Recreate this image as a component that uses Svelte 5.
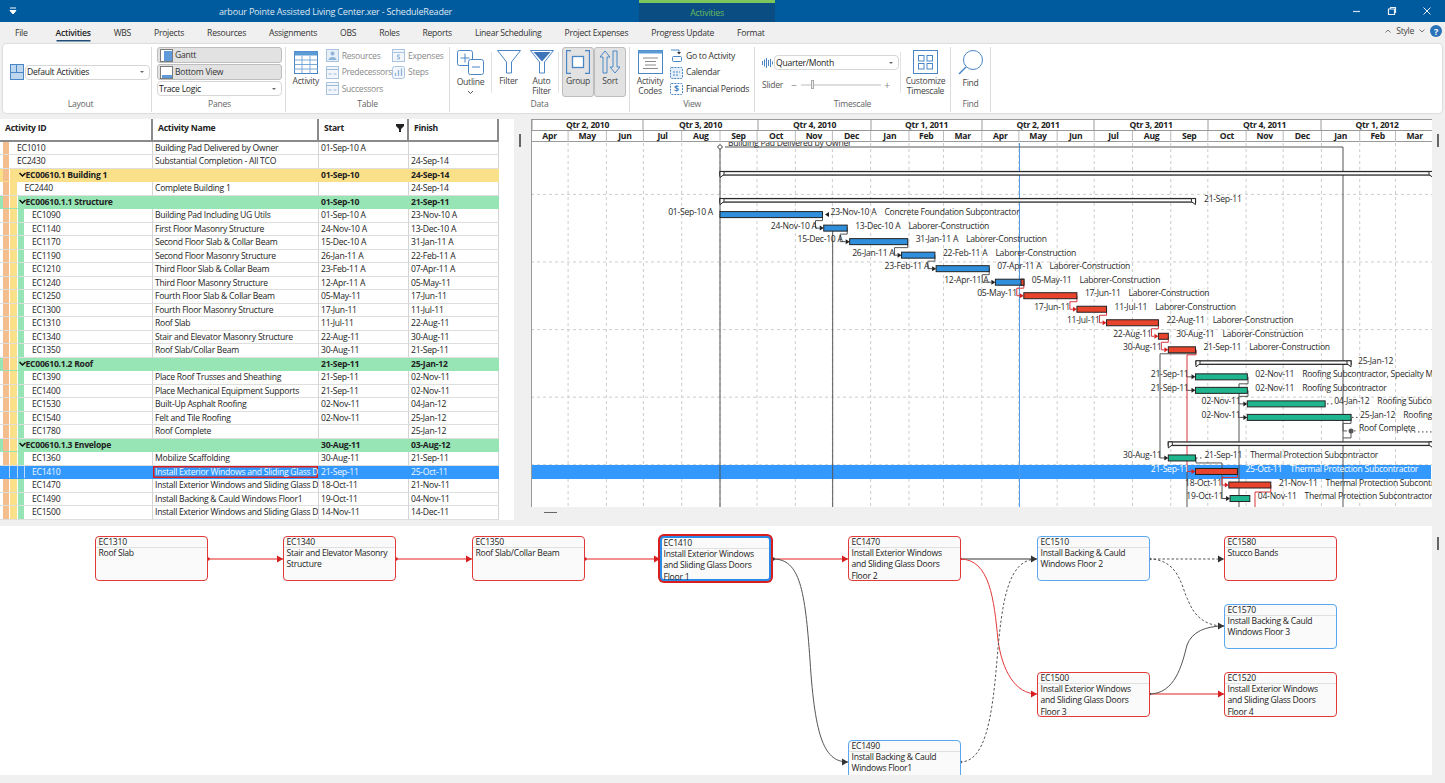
<script>
  const MON = { Jan: 0, Feb: 1, Mar: 2, Apr: 3, May: 4, Jun: 5, Jul: 6, Aug: 7, Sep: 8, Oct: 9, Nov: 10, Dec: 11 };
  const day = (s) => {
    const [d, m, y] = s.split(' ')[0].split('-');
    return Date.UTC(2000 + +y, MON[m], +d) / 86400000;
  };
  const ORIGIN = Date.UTC(2010, 8, 1) / 86400000;
  const PX = 1.235;
  const dx = (s) => 720 + (day(s) - ORIGIN) * PX;
  const ry = (i) => 147 + 13.52 * i;

  const W1 = 'Install Exterior Windows and Sliding Glass Doors Floor ';
  const LC = 'Laborer-Construction';
  const RS = 'Roofing Subcontractor';
  const TP = 'Thermal Protection Subcontractor';
  const rows = [
    { id: 'EC1010', name: 'Building Pad Delivered by Owner', start: '01-Sep-10 A', finish: '', lv: 0 },
    { id: 'EC2430', name: 'Substantial Completion - All TCO', start: '', finish: '24-Sep-14', lv: 0 },
    { wbs: 1, id: 'EC00610.1 Building 1', start: '01-Sep-10', finish: '24-Sep-14', lv: 1 },
    { id: 'EC2440', name: 'Complete Building 1', start: '', finish: '24-Sep-14', lv: 1 },
    { wbs: 2, id: 'EC00610.1.1 Structure', start: '01-Sep-10', finish: '21-Sep-11', lv: 2 },
    { id: 'EC1090', name: 'Building Pad Including UG Utils', start: '01-Sep-10 A', finish: '23-Nov-10 A', lv: 2, c: 'b', res: 'Concrete Foundation Subcontractor' },
    { id: 'EC1140', name: 'First Floor Masonry Structure', start: '24-Nov-10 A', finish: '13-Dec-10 A', lv: 2, c: 'b', res: LC, arr: 1 },
    { id: 'EC1170', name: 'Second Floor Slab & Collar Beam', start: '15-Dec-10 A', finish: '31-Jan-11 A', lv: 2, c: 'b', res: LC, arr: 1 },
    { id: 'EC1190', name: 'Second Floor Masonry Structure', start: '26-Jan-11 A', finish: '22-Feb-11 A', lv: 2, c: 'b', res: LC, arr: 1 },
    { id: 'EC1210', name: 'Third Floor Slab & Collar Beam', start: '23-Feb-11 A', finish: '07-Apr-11 A', lv: 2, c: 'b', res: LC, arr: 1 },
    { id: 'EC1240', name: 'Third Floor Masonry Structure', start: '12-Apr-11 A', finish: '05-May-11', lv: 2, c: 'b', res: LC, arr: 1 },
    { id: 'EC1250', name: 'Fourth Floor Slab & Collar Beam', start: '05-May-11', finish: '17-Jun-11', lv: 2, c: 'r', res: LC, arr: 2 },
    { id: 'EC1300', name: 'Fourth Floor Masonry Structure', start: '17-Jun-11', finish: '11-Jul-11', lv: 2, c: 'r', res: LC, arr: 2 },
    { id: 'EC1310', name: 'Roof Slab', start: '11-Jul-11', finish: '22-Aug-11', lv: 2, c: 'r', res: LC, arr: 2 },
    { id: 'EC1340', name: 'Stair and Elevator Masonry Structure', start: '22-Aug-11', finish: '30-Aug-11', lv: 2, c: 'r', res: LC, arr: 2 },
    { id: 'EC1350', name: 'Roof Slab/Collar Beam', start: '30-Aug-11', finish: '21-Sep-11', lv: 2, c: 'r', res: LC, arr: 2 },
    { wbs: 2, id: 'EC00610.1.2 Roof', start: '21-Sep-11', finish: '25-Jan-12', lv: 2 },
    { id: 'EC1390', name: 'Place Roof Trusses and Sheathing', start: '21-Sep-11', finish: '02-Nov-11', lv: 2, c: 't', res: RS + ', Specialty Materials', arr: 1 },
    { id: 'EC1400', name: 'Place Mechanical Equipment Supports', start: '21-Sep-11', finish: '02-Nov-11', lv: 2, c: 't', res: RS, arr: 1 },
    { id: 'EC1530', name: 'Built-Up Asphalt Roofing', start: '02-Nov-11', finish: '04-Jan-12', lv: 2, c: 't', res: RS, arr: 1, lead: 1 },
    { id: 'EC1540', name: 'Felt and Tile Roofing', start: '02-Nov-11', finish: '25-Jan-12', lv: 2, c: 't', res: RS, arr: 1, lead: 1 },
    { id: 'EC1780', name: 'Roof Complete', start: '', finish: '25-Jan-12', lv: 2 },
    { wbs: 2, id: 'EC00610.1.3 Envelope', start: '30-Aug-11', finish: '03-Aug-12', lv: 2 },
    { id: 'EC1360', name: 'Mobilize Scaffolding', start: '30-Aug-11', finish: '21-Sep-11', lv: 2, c: 't', res: TP, arr: 1, lead: 1 },
    { id: 'EC1410', name: W1 + '1', start: '21-Sep-11', finish: '25-Oct-11', lv: 2, c: 'r', res: TP, arr: 2, sel: 1 },
    { id: 'EC1470', name: W1 + '2', start: '18-Oct-11', finish: '21-Nov-11', lv: 2, c: 'r', res: TP, arr: 2 },
    { id: 'EC1490', name: 'Install Backing & Cauld Windows Floor1', start: '19-Oct-11', finish: '04-Nov-11', lv: 2, c: 't', res: TP, arr: 1 },
    { id: 'EC1500', name: W1 + '3', start: '14-Nov-11', finish: '14-Dec-11', lv: 2 }
  ].map((r, i) => ({ ...r, i, y: ry(i) }));

  const bars = rows.filter((r) => r.c).map((r) => ({ ...r, x1: dx(r.start), x2: dx(r.finish) }));

  const quarters = [
    ['Qtr 2, 2010', 532, 643], ['Qtr 3, 2010', 643, 758], ['Qtr 4, 2010', 758, 871], ['Qtr 1, 2011', 871, 982],
    ['Qtr 2, 2011', 982, 1094], ['Qtr 3, 2011', 1094, 1208], ['Qtr 4, 2011', 1208, 1321], ['Qtr 1, 2012', 1321, 1433]
  ];
  const names = ['Apr', 'May', 'Jun', 'Jul', 'Aug', 'Sep', 'Oct', 'Nov', 'Dec', 'Jan', 'Feb', 'Mar'];
  const months = [];
  for (let k = 0; k < 24; k++) {
    const y = 2010 + Math.floor((k + 3) / 12);
    const m = (k + 3) % 12;
    const m2 = (m + 1) % 12;
    const y2 = m === 11 ? y + 1 : y;
    const x1 = 720 + (Date.UTC(y, m, 1) / 86400000 - ORIGIN) * PX;
    const x2 = 720 + (Date.UTC(y2, m2, 1) / 86400000 - ORIGIN) * PX;
    months.push({ n: names[k % 12], x1, x2 });
  }
  const hgrid = [4, 9, 14, 19, 24].map((k) => 140.3 + 13.52 * k);

  const step = (a, b) => {
    const ya = a.y;
    const yb = b.y;
    const xb = b.x1;
    const turn = Math.min(a.x2, xb) - 7;
    return `M${a.x2} ${ya}V${ya + 6}H${turn}V${yb}H${xb - 4}`;
  };
  const seq = [];
  for (let k = 5; k < 15; k++) {
    const a = bars.find((b) => b.i === k);
    const b = bars.find((c) => c.i === k + 1);
    seq.push({ d: step(a, b), red: k >= 10 });
  }
  const R = ry;
  const dark = [
    `M725 ${R(0)}H1343V507`,
    `M720 ${R(0)}V507`,
    `M832.7 ${R(6)}V507`,
    `M1196 ${R(15)}V${R(15) + 4}H1160V${R(23)}H1165`,
    `M1248 ${R(17)}V${R(17) + 7}H1239V507`,
    `M1248 ${R(18)}V${R(18) + 6}H1239`,
    `M1239 ${R(19)}H1244`,
    `M1239 ${R(20)}H1244`,
    `M1187 ${R(17)}H1192`,
    `M1187 ${R(18)}H1192`,
    `M1187 ${R(24)}V507`,
    `M1196 ${R(23)}V${R(23) + 5}H1222V${R(26)}H1227`,
    `M1351 ${R(20)}V${R(20) + 6}H1343V${R(21)}H1347`,
    `M1351 ${R(21)}V${R(21) + 7}H1343`
  ];
  const red = [
    `M1196 ${R(15)}V${R(15) + 5}H1187V${R(24)}H1192`,
    `M${dx('25-Oct-11')} ${R(24)}V${R(24) + 6}H1222V${R(25)}H1226`,
    `M${dx('21-Nov-11')} ${R(25)}V${R(25) + 7}H1255V507`
  ];

  const tabs = ['File', 'Activities', 'WBS', 'Projects', 'Resources', 'Assignments', 'OBS', 'Roles', 'Reports', 'Linear Scheduling', 'Project Expenses', 'Progress Update', 'Format'];

  const nodes = [
    { id: 'EC1310', t: ['Roof Slab'], x: 95, y: 536, k: 'red' },
    { id: 'EC1340', t: ['Stair and Elevator Masonry', 'Structure'], x: 283, y: 536, k: 'red' },
    { id: 'EC1350', t: ['Roof Slab/Collar Beam'], x: 472, y: 536, k: 'red' },
    { id: 'EC1410', t: ['Install Exterior Windows', 'and Sliding Glass Doors', 'Floor 1'], x: 660, y: 536, k: 'sel' },
    { id: 'EC1470', t: ['Install Exterior Windows', 'and Sliding Glass Doors', 'Floor 2'], x: 848, y: 536, k: 'red' },
    { id: 'EC1510', t: ['Install Backing & Cauld', 'Windows Floor 2'], x: 1037, y: 536, k: 'blue' },
    { id: 'EC1580', t: ['Stucco Bands'], x: 1224, y: 536, k: 'red' },
    { id: 'EC1570', t: ['Install Backing & Cauld', 'Windows Floor 3'], x: 1224, y: 604, k: 'blue' },
    { id: 'EC1500', t: ['Install Exterior Windows', 'and Sliding Glass Doors', 'Floor 3'], x: 1037, y: 672, k: 'red' },
    { id: 'EC1520', t: ['Install Exterior Windows', 'and Sliding Glass Doors', 'Floor 4'], x: 1224, y: 672, k: 'red' },
    { id: 'EC1490', t: ['Install Backing & Cauld', 'Windows Floor1'], x: 848, y: 740, k: 'blue' }
  ];
  const links = [
    { d: 'M208 559H283', c: 'r', s: 1 }, { d: 'M396 559H472', c: 'r', s: 1 }, { d: 'M585 559H660', c: 'r', s: 1 }, { d: 'M773 559H848', c: 'r', s: 1 },
    { d: 'M960 559H1037', c: 'k', s: 1 },
    { d: 'M1149 559H1224', c: 'k', dash: 1 },
    { d: 'M1149 694H1224', c: 'r', s: 1 },
    { d: 'M773 559C800 559 805 590 810 660C815 740 825 762 848 762', c: 'k' },
    { d: 'M960 559C990 559 994 600 998 640C1002 670 1015 694 1037 694', c: 'r' },
    { d: 'M960 762C985 762 992 720 997 660C1002 600 1008 559 1037 559', c: 'k', dash: 1 },
    { d: 'M1149 559C1180 559 1182 590 1188 600C1194 616 1205 626 1224 626', c: 'k', dash: 1 },
    { d: 'M1149 694C1175 694 1182 665 1187 645C1192 632 1205 626 1224 626', c: 'k' }
  ];
  const arrowTips = [
    [283, 559, 'r'], [472, 559, 'r'], [660, 559, 'r'], [848, 559, 'r'], [1037, 559, 'k'], [1224, 559, 'k'],
    [1224, 694, 'r'], [848, 762, 'k'], [1037, 694, 'r'], [1224, 626, 'k']
  ];
  const dots = [
    [208, 559, 'r'], [396, 559, 'r'], [585, 559, 'r'], [773, 559, 'k'], [960, 559, 'r'], [1149, 559, 'k'],
    [1149, 694, 'k'], [960, 762, 'k']
  ];
</script>

<div class="app">
  <header class="titlebar">
    <svg class="qat" width="10" height="8" viewBox="0 0 10 8"><path d="M2 1h6M2 3.500h6L5 7z" fill="#fff" stroke="#fff" stroke-width="1" /></svg>
    <span class="title">arbour Pointe Assisted Living Center.xer - ScheduleReader</span>
    <div class="context"><span>Activities</span></div>
    <div class="winbtns">
      <svg width="10" height="10" viewBox="0 0 10 10"><path d="M1 5.500h7" stroke="#cfe0f0" stroke-width="1.200" /></svg>
      <svg width="10" height="10" viewBox="0 0 10 10"><path d="M3.500 2.500V1.500h5v5H7.500M1.500 3h6v5.500h-6z" fill="none" stroke="#e6eef6" stroke-width="1.200" /></svg>
      <svg width="10" height="10" viewBox="0 0 10 10"><path d="M1.500 1.500l7 7M8.500 1.500l-7 7" stroke="#e6eef6" stroke-width="1" /></svg>
    </div>
  </header>

  <nav class="tabs">
    {#each tabs as t}
      <span class="tab" class:active={t === 'Activities'} class:file={t === 'File'}>{t}</span>
    {/each}
    <div class="stylebox">
      <svg width="6" height="4" viewBox="0 0 6 4"><path d="M.5 3.500L3 1l2.500 2.500" fill="none" stroke="#777" /></svg>
      <span>Style</span>
      <svg width="6" height="4" viewBox="0 0 6 4"><path d="M.5.500L3 3 5.500.500" fill="none" stroke="#777" /></svg>
      <span class="help">?</span>
    </div>
  </nav>

  <section class="ribbon">
    <div class="grp g-layout">
      <div class="grp-body center-row">
        <svg width="14" height="16" viewBox="0 0 14 16"><rect x=".5" y=".5" width="13" height="15" fill="#bcd6ee" stroke="#4a86c5" /><path d="M.5 8.500h13M6.500.500v8" stroke="#4a86c5" /></svg>
        <div class="combo wide"><span>Default Activities</span><i class="caret"></i></div>
      </div>
      <div class="grp-label">Layout</div>
    </div>

    <div class="grp g-panes">
      <div class="grp-body stack">
        <div class="tbtn pressed">
          <svg width="13" height="13" viewBox="0 0 13 13"><rect x=".5" y=".5" width="12" height="12" fill="#fff" stroke="#7b7b7b" /><rect x="4" y="2" width="8" height="10" fill="#5f9bd8" /></svg>
          <span>Gantt</span>
        </div>
        <div class="tbtn pressed">
          <svg width="13" height="13" viewBox="0 0 13 13"><rect x=".5" y=".5" width="12" height="12" fill="#fff" stroke="#7b7b7b" /><rect x="2" y="9" width="10" height="3" fill="#5f9bd8" /></svg>
          <span>Bottom View</span>
        </div>
        <div class="combo full"><span>Trace Logic</span><i class="caret"></i></div>
      </div>
      <div class="grp-label">Panes</div>
    </div>

    <div class="grp g-table">
      <div class="grp-body row">
        <div class="big">
          <svg width="24" height="24" viewBox="0 0 24 24"><rect x=".5" y="1.500" width="23" height="22" fill="#fff" stroke="#4a86c5" /><rect x=".5" y="1.500" width="23" height="4" fill="#5b9bd5" /><path d="M.5 10h23M.5 14.500h23M.5 19h23M8 5.500v18M16 5.500v18" stroke="#7aa8d6" /></svg>
          <span>Activity</span>
        </div>
        <div class="col dim">
          <div class="sm"><svg width="13" height="13" viewBox="0 0 13 13"><rect x=".5" y=".5" width="12" height="12" fill="#e6eef7" stroke="#aac4e0" /><circle cx="6.500" cy="4.500" r="2" fill="#8fb3d9" /><path d="M2.500 11c0-4 8-4 8 0z" fill="#8fb3d9" /></svg><span>Resources</span></div>
          <div class="sm"><svg width="13" height="13" viewBox="0 0 13 13"><rect x=".5" y=".5" width="12" height="12" fill="#f2f6fb" stroke="#aac4e0" /><path d="M.5 3.500h12M2.500 8h3M7.500 8h3" stroke="#9dbbdc" /></svg><span>Predecessors</span></div>
          <div class="sm"><svg width="13" height="13" viewBox="0 0 13 13"><rect x=".5" y=".5" width="12" height="12" fill="#f2f6fb" stroke="#aac4e0" /><path d="M.5 3.500h12M2.500 8h3M7.500 8h3" stroke="#9dbbdc" /></svg><span>Successors</span></div>
        </div>
        <div class="col dim">
          <div class="sm"><svg width="13" height="13" viewBox="0 0 13 13"><rect x=".5" y=".5" width="12" height="12" fill="#f2f6fb" stroke="#aac4e0" /><path d="M.5 3.500h12" stroke="#aac4e0" /><path d="M8 6H5.500v2H7.500v2H5" fill="none" stroke="#8fb3d9" /></svg><span>Expenses</span></div>
          <div class="sm"><svg width="13" height="13" viewBox="0 0 13 13"><rect x=".5" y=".5" width="12" height="12" rx="2" fill="#f2f6fb" stroke="#aac4e0" /><path d="M3.500 10V7M6.500 10V4M9.500 10V2.500" stroke="#8fb3d9" stroke-width="1.300" /></svg><span>Steps</span></div>
        </div>
      </div>
      <div class="grp-label">Table</div>
    </div>

    <div class="grp g-data">
      <div class="grp-body row">
        <div class="big outline">
          <svg width="27" height="25" viewBox="0 0 27 25"><rect x=".5" y=".5" width="15" height="15" rx="2" fill="#fff" stroke="#4a86c5" /><path d="M3.500 8h9M8 3.500v9" stroke="#4a86c5" /><rect x="11.500" y="9.500" width="15" height="15" rx="2" fill="#fff" stroke="#4a86c5" /><path d="M15 17h8" stroke="#4a86c5" /></svg>
          <span>Outline</span>
          <svg width="7" height="5" viewBox="0 0 7 5"><path d="M1 1l2.500 2.500L6 1" fill="none" stroke="#555" /></svg>
        </div>
        <div class="vsep"></div>
        <div class="big filter">
          <svg width="24" height="24" viewBox="0 0 24 24"><path d="M.5.500h23L14.500 12v11h-5V12z" fill="#fff" stroke="#4a86c5" /></svg>
          <span>Filter</span>
        </div>
        <div class="big filter">
          <svg width="24" height="24" viewBox="0 0 24 24"><path d="M.5.500h23L14.500 12v11h-5V12z" fill="#fff" stroke="#4a86c5" /><path d="M3.500 2h17l-8.500 9.500z" fill="#3f74b8" /></svg>
          <span>Auto<br />Filter</span>
        </div>
        <div class="vsep"></div>
        <div class="press-pair">
          <div class="big pressbig">
            <svg width="24" height="24" viewBox="0 0 24 24"><path d="M5 .5H.5v23H5M19 .5h4.500v23H19" fill="none" stroke="#4a86c5" stroke-width="1.300" /><rect x="6.500" y="6.500" width="11" height="11" fill="#fff" stroke="#4a86c5" stroke-width="1.300" /></svg>
            <span>Group</span>
          </div>
          <div class="big pressbig">
            <svg width="24" height="24" viewBox="0 0 24 24"><path d="M7 1L2 7H5V23H9V7H12z" fill="none" stroke="#4a86c5" /><path d="M17 23L12 17H15V1H19V17H22z" fill="none" stroke="#4a86c5" /></svg>
            <span>Sort</span>
          </div>
        </div>
      </div>
      <div class="grp-label">Data</div>
    </div>

    <div class="grp g-view">
      <div class="grp-body row">
        <div class="big">
          <svg width="25" height="24" viewBox="0 0 25 24"><rect x=".5" y=".5" width="24" height="23" fill="#fff" stroke="#4a86c5" /><rect x=".5" y=".5" width="24" height="3" fill="#5b9bd5" /><path d="M5 8h15M7 11.500h11M7 15h11M5 18.500h15" stroke="#8a8a8a" /></svg>
          <span>Activity<br />Codes</span>
        </div>
        <div class="col">
          <div class="sm"><svg width="13" height="13" viewBox="0 0 13 13"><path d="M1 1h8v3" fill="none" stroke="#4a86c5" /><path d="M7 3l2 2.500L11 3z" fill="#333" /><rect x="2.500" y="7.500" width="9" height="5" rx="1" fill="#fff" stroke="#4a86c5" /></svg><span>Go to Activity</span></div>
          <div class="sm"><svg width="13" height="13" viewBox="0 0 13 13"><rect x=".5" y="1.500" width="12" height="11" rx="1" fill="#e4eff9" stroke="#4a86c5" stroke-dasharray="2 1" /><path d="M3 6h2M6 6h2M9 6h1M3 9h2M6 9h2" stroke="#4a86c5" /></svg><span>Calendar</span></div>
          <div class="sm"><svg width="13" height="13" viewBox="0 0 13 13"><rect x=".5" y="1.500" width="12" height="11" rx="1" fill="#fff" stroke="#4a86c5" stroke-dasharray="2 1" /><text x="6.500" y="10" class="dollar" text-anchor="middle">$</text></svg><span>Financial Periods</span></div>
        </div>
      </div>
      <div class="grp-label">View</div>
    </div>

    <div class="grp g-time">
      <div class="grp-body row">
        <div class="timecol">
          <div class="center-row">
            <svg width="11" height="12" viewBox="0 0 11 12"><path d="M.5 4v4M2.500 2.500v7M4.500 1v10M6.500 3v6M8.500 2v8M10.500 4.500v3" stroke="#4a86c5" /></svg>
            <div class="combo qm"><span>Quarter/Month</span><i class="caret"></i></div>
          </div>
          <div class="slider">
            <span class="sl-label">Slider</span>
            <span class="sl-pm">−</span>
            <div class="track"><i class="thumb"></i></div>
            <span class="sl-pm">+</span>
          </div>
        </div>
        <div class="vsep tall"></div>
        <div class="big cust">
          <svg width="25" height="24" viewBox="0 0 25 24"><rect x=".5" y=".5" width="24" height="23" fill="#fff" stroke="#4a86c5" /><rect x="5.500" y="5.500" width="5.500" height="5.500" fill="none" stroke="#4a86c5" /><rect x="14" y="5.500" width="5.500" height="5.500" fill="none" stroke="#4a86c5" /><rect x="5.500" y="13.500" width="5.500" height="5.500" fill="none" stroke="#4a86c5" /><rect x="14" y="13.500" width="5.500" height="5.500" fill="none" stroke="#4a86c5" /></svg>
          <span>Customize<br />Timescale</span>
        </div>
      </div>
      <div class="grp-label">Timescale</div>
    </div>

    <div class="grp g-find">
      <div class="grp-body row">
        <div class="big">
          <svg width="26" height="26" viewBox="0 0 26 26"><circle cx="15" cy="10" r="9.500" fill="#fff" stroke="#4a86c5" /><path d="M8 17L1 24" stroke="#4a86c5" stroke-width="1.500" /></svg>
          <span>Find</span>
        </div>
      </div>
      <div class="grp-label">Find</div>
    </div>
    <div class="grp g-end"></div>
  </section>

  <main class="panes">
    <section class="left">
      <div class="table">
        <div class="thead">
          <div class="th">Activity ID</div>
          <div class="th">Activity Name</div>
          <div class="th startth">Start
            <svg width="8" height="8" viewBox="0 0 8 8"><path d="M0 0h8v2L5 5v3H3V5L0 2z" fill="#222" /></svg>
          </div>
          <div class="th">Finish</div>
        </div>
        {#each rows as r}
          <div class="tr" class:wbs1={r.wbs === 1} class:wbs2={r.wbs === 2} class:sel={r.sel}>
            <div class="td idcell" class:span2={r.wbs}>
              <i class="band orange"></i>
              {#if r.lv >= 1}<i class="band yellow"></i>{/if}
              {#if r.lv >= 2 && !r.wbs}<i class="band green"></i>{/if}
              {#if r.wbs}
                <svg class="chev" width="7" height="5" viewBox="0 0 7 5"><path d="M.5 1L3.500 4L6.500 1" fill="none" stroke="#111" stroke-width="1.500" /></svg>
              {/if}
              <span>{r.id}</span>
            </div>
            {#if !r.wbs}<div class="td namecell">{r.name}</div>{/if}
            <div class="td">{r.start}</div>
            <div class="td">{r.finish}</div>
          </div>
        {/each}
      </div>
      <div class="lgap"></div>
      <div class="vbar"><i></i></div>
    </section>

    <section class="right">
      <div class="ganttwrap">
        <svg class="gantt" viewBox="531 119 901 388" width="901" height="388">
          <rect x="531" y="119" width="901" height="388" fill="#fff" />
          {#each months as m}
            <path d="M{m.x1} 143V507" class="vgrid" />
          {/each}
          {#each hgrid as y}
            <path d="M531 {y}H1432" class="vgrid" />
          {/each}
          <rect x="532" y="465" width="899" height="14" fill="#3399ff" />
          <path d="M1019.500 143V507" stroke="#4f9be8" stroke-width="1" />

          <text class="glab" x="728" y="146">Building Pad Delivered by Owner</text>
          {#each dark as d}<path {d} class="lnk" />{/each}
          {#each seq as l}<path d={l.d} class={l.red ? 'lnk lred' : 'lnk'} />{/each}
          {#each red as d}<path {d} class="lnk lred" />{/each}

          <path d="M720 {ry(0) - 2.500}l2.500 2.500l-2.500 2.500l-2.500-2.500z" fill="#fff" stroke="#333" />

          <!-- summaries -->
          {#each [[2, 720, 1433], [4, 720, dx('21-Sep-11')], [16, 1196, 1351], [22, dx('30-Aug-11'), 1433]] as s}
            <g>
              <rect x={s[1]} y={ry(s[0]) - 2.500} width={s[2] - s[1]} height="3.500" fill="#fff" stroke="#2a2a2a" stroke-width="1.300" />
              <path d="M{s[1]} {ry(s[0]) - 2.500}h4v3l-4 3z" fill="#fff" stroke="#2a2a2a" />
              <path d="M{s[2]} {ry(s[0]) - 2.500}h-4v3l4 3z" fill="#fff" stroke="#2a2a2a" />
            </g>
          {/each}
          <text class="glab" x="1204" y={ry(4) + 0.500}>21-Sep-11</text>
          <text class="glab" x="1358" y={ry(16) + 0.500}>25-Jan-12</text>

          <!-- milestone -->
          <circle cx="1351" cy={ry(21)} r="2.500" fill="#555" />
          <text class="glab" x="1359" y={ry(21) + 0.500}>Roof Complete</text>
          <path d="M1354 {ry(21)}H1358M1406 {ry(21) + 1}H1432M1327 {ry(19)}H1334M1352 {ry(20)}H1358M1196 {ry(23)}H1204" class="dots" />

          {#each bars as b}
            <g>
              <rect x={b.x1} y={b.y - 3} width={Math.max(b.x2 - b.x1, 2)} height="6" class={'bar ' + b.c} />
              {#if b.arr}
                <path d="M{b.x1 - 4} {b.y - 2.500}L{b.x1} {b.y}L{b.x1 - 4} {b.y + 2.500}z" fill={b.arr === 2 ? '#d62020' : '#222'} />
              {/if}
              <text class="glab" class:lw={b.sel} x={b.x1 - 7} y={b.y + 0.500} text-anchor="end">{b.start}</text>
              <text class="glab" class:lw={b.sel} x={b.x2 + (b.lead ? 9 : 8)} y={b.y + 0.500}>{b.finish}<tspan dx="8">{b.res}</tspan></text>
            </g>
          {/each}
          <rect x="1021" y={ry(10) - 3} width="3" height="6" class="bar r" />
          <path d="M825 {ry(5) + 0}l4-2.500v5z" fill="#222" />

          <!-- header -->
          <rect x="531" y="119" width="901" height="23" fill="#fff" />
          <path d="M531 119.500H1432M531 130.500H1432M531 141.500H1432" stroke="#9a9a9a" />
          {#each quarters as q}
            <path d="M{q[1]} 119V131" stroke="#9a9a9a" />
            <text class="ghead" x={(q[1] + q[2]) / 2} y="128" text-anchor="middle">{q[0]}</text>
          {/each}
          {#each months as m}
            <path d="M{m.x1} 131V142" stroke="#bbb" />
            <text class="ghead" x={(m.x1 + m.x2) / 2} y="139" text-anchor="middle">{m.n}</text>
          {/each}
          <path d="M531.500 119V507" stroke="#9a9a9a" />
        </svg>
      </div>
      <div class="hscroll"><i></i></div>
    </section>
    <div class="vbar"><i></i></div>
  </main>

  <section class="network">
    <svg class="netsvg" viewBox="0 526 1445 249" width="1445" height="249">
      {#each links as l}
        <path d={l.d} fill="none" class={(l.c === 'r' ? 'nl nr' : 'nl nk') + (l.s ? ' nst' : '')} stroke-dasharray={l.dash ? '2.500 2' : null} />
      {/each}
      {#each arrowTips as a}
        <path d="M{a[0]} {a[1]}l-6-3.500v7z" fill={a[2] === 'r' ? '#d81e1e' : '#333'} />
      {/each}
      {#each dots as a}
        <circle cx={a[0]} cy={a[1]} r="1.800" fill={a[2] === 'r' ? '#d81e1e' : '#333'} />
      {/each}
    </svg>
    {#each nodes as n}
      <div class={'node ' + n.k} style="left:{n.x}px;top:{n.y - 526}px">
        <div class="nid">{n.id}</div>
        <div class="ntext">{#each n.t as line}<div>{line}</div>{/each}</div>
      </div>
    {/each}
    <div class="nscroll"><i></i></div>
  </section>
</div>

<style>
  :global(body) { margin: 0; background: #f0f0f0; }
  .app {
    width: 1445px; height: 783px; overflow: hidden; display: flex; flex-direction: column;
    font-family: "Open Sans", "Noto Sans", sans-serif; font-size: 8.600px; letter-spacing: -0.260px; color: #222; background: #f0f0f0;
  }
  .titlebar {
    height: 22px; flex: none; background: #005a9e; color: #dfe9f3; position: relative; display: flex; align-items: center;
  }
  .qat { margin-left: 8px; }
  .title { margin-left: 201px; font-size: 9px; letter-spacing: -0.180px; }
  .context {
    position: absolute; left: 639px; top: 0; width: 136px; height: 22px; box-sizing: border-box;
    background: #0a4d82; border-top: 3px solid #7cc65b; color: #6cbb5d; display: flex; align-items: center; justify-content: center; font-size: 8.800px;
  }
  .winbtns { margin-left: auto; display: flex; gap: 25px; padding-right: 13px; align-items: center; }
  .tabs {
    height: 22px; flex: none; display: flex; align-items: center; gap: 23px; padding-left: 15px; position: relative; font-size: 8.600px; color: #333;
  }
  .tab { padding-bottom: 1px; }
  .tab.file { margin-right: 5px; }
  .tab.active { font-weight: 600; color: #222; box-shadow: 0 2px 0 -0.500px #1f4e79; }
  .stylebox { position: absolute; right: 3px; top: 3px; display: flex; align-items: center; gap: 5px; color: #444; }
  .help {
    width: 12px; height: 12px; border-radius: 50%; background: #2a72b8; color: #fff; font-weight: 700; font-size: 9px;
    display: flex; align-items: center; justify-content: center;
  }
  .ribbon {
    height: 69px; flex: none; margin: 0 3px; background: #fff; border-radius: 4px; box-shadow: 0 0 1px 1px #dcdcdc; display: flex; box-sizing: border-box; padding: 3px 0 1px;
  }
  .grp { display: flex; flex-direction: column; border-right: 1px solid #dcdcdc; box-sizing: border-box; flex: none; }
  .grp-body { flex: 1; min-height: 0; }
  .grp-label { height: 15px; text-align: center; color: #666; line-height: 15px; }
  .g-layout { width: 149px; padding-left: 7px; }
  .g-panes { width: 134px; padding: 0 3px 0 5px; }
  .g-table { width: 164px; }
  .g-data { width: 180px; }
  .g-view { width: 125px; }
  .g-time { width: 196px; }
  .g-find { width: 40px; }
  .g-end { border-right: 0; flex: 1; }
  .center-row { display: flex; align-items: center; gap: 1px; }
  .g-layout .center-row { height: 50px; box-sizing: border-box; }
  .stack { display: flex; flex-direction: column; gap: 1px; }
  .combo {
    height: 15px; box-sizing: border-box; border: 1px solid #d6d6d6; border-radius: 4px; background: #fff; display: flex; align-items: center; padding: 0 5px 0 1px; justify-content: space-between; color: #222;
  }
  .caret { width: 0; height: 0; border: 2px solid transparent; border-top: 2px solid #666; margin-top: 2px; }
  .wide { width: 125px; }
  .full { width: 125px; }
  .qm { width: 125px; }
  .tbtn {
    width: 125px; height: 16px; box-sizing: border-box; display: flex; align-items: center; gap: 2px; padding: 0 2px;
  }
  .pressed { background: #e2e2e2; border: 1px solid #bdbdbd; border-radius: 3px; color: #333; }
  .row { display: flex; }
  .big { display: flex; flex-direction: column; align-items: center; text-align: center; line-height: 9.500px; padding-top: 3px; color: #444; }
  .big svg { margin-bottom: 3px; }
  .col { display: flex; flex-direction: column; gap: 3.500px; padding-top: 2px; }
  .sm { display: flex; align-items: center; gap: 3px; height: 13px; color: #333; }
  .dim .sm { color: #8a8a8a; }
  .g-table .big { width: 48px; }
  .g-table .col { width: 69px; }
  .outline { width: 41px; }
  .outline svg:last-child { margin: 2px 0 0; }
  .vsep { width: 1px; height: 41px; background: #e2e2e2; margin-top: 5px; flex: none; }
  .vsep.tall { margin-left: 1px; }
  .filter { width: 33px; }
  .press-pair { display: flex; margin-left: 3px; }
  .pressbig { width: 32px; height: 50px; box-sizing: border-box; background: #e2e2e2; border: 1px solid #bdbdbd; border-radius: 3px; padding-top: 2px; }
  .g-view .big { width: 40px; margin-left: 0; }
  .dollar { font-size: 9px; fill: #4a86c5; font-weight: 700; letter-spacing: 0; }
  .timecol { width: 145px; padding: 8px 0 0 7px; box-sizing: border-box; }
  .slider { display: flex; align-items: center; margin-top: 9px; color: #555; }
  .sl-label { width: 28px; }
  .sl-pm { width: 8px; text-align: center; color: #888; font-size: 10px; line-height: 8px; }
  .track { width: 80px; height: 2px; background: #ddd; margin: 0 2px 0 3px; position: relative; }
  .thumb { position: absolute; left: 10px; top: -4px; width: 3px; height: 9px; background: #ececec; border: 1px solid #aaa; box-sizing: border-box; }
  .cust { width: 50px; }
  .g-find .big { width: 39px; }

  .panes { height: 401px; flex: none; margin-top: 6px; display: flex; }
  .left { width: 530px; flex: none; display: flex; }
  .table { width: 499px; background: #fff; }
  .lgap { width: 15px; background: #fff; }
  .vbar { flex: 1; background: #f0f0f0; padding: 15px 0 0 5px; }
  .vbar i { display: block; width: 2px; height: 13px; background: #666; }
  .thead { display: grid; grid-template-columns: 153px 166px 90px 90px; height: 22.500px; }
  .th {
    font-weight: 700; color: #222; padding-left: 5px; display: flex; align-items: center; justify-content: space-between;
    border-right: 2px solid #8a8a8a; border-bottom: 2px solid #8a8a8a; box-sizing: border-box; padding-bottom: 3px; padding-right: 3px;
  }
  .tr {
    display: grid; grid-template-columns: 153px 166px 90px 90px; height: 13.520px; box-sizing: border-box; line-height: 12.500px; color: #222;
  }
  .td { padding-left: 2px; border-right: 1px solid #d4d4d4; border-bottom: 1px solid #dedede; overflow: hidden; white-space: nowrap; box-sizing: border-box; }
  .idcell { display: flex; padding-left: 2.500px; }
  .idcell span { padding-left: 7px; }
  .band { width: 6.500px; flex: none; margin-right: 1px; margin-bottom: -1px; }
  .orange { background: #f3bd8e; }
  .yellow { background: #fbe08a; }
  .green { background: #97e5b4; }
  .span2 { grid-column: span 2; }
  .wbs1, .wbs2 { font-weight: 700; }
  .wbs1 .td { background: #fbe08a; border-color: transparent; }
  .wbs2 .td { background: #97e5b4; border-color: transparent; }
  .wbs1 .orange, .wbs2 .orange, .wbs2 .yellow { box-shadow: 1px 0 0 #fff; }
  .chev { margin: 3.500px 0 0 1px; flex: none; }
  .idcell .chev + span { padding-left: 0; }
  .sel .td { background: #3399ff; color: #f2f8ff; border-color: #3399ff; }
  .sel .band { background: #3399ff; box-shadow: 1px 0 0 #bcdcff; }
  .sel .namecell { box-shadow: inset 0 0 0 1.500px #d81e1e; }

  .right { width: 901px; flex: none; display: flex; flex-direction: column; margin-left: 1px; }
  .ganttwrap { height: 388px; overflow: hidden; }
  .gantt { display: block; }
  .hscroll { height: 13px; background: #f0f0f0; position: relative; }
  .hscroll i { position: absolute; left: 13px; top: 5px; width: 13px; height: 1px; background: #666; }
  .vgrid { stroke: #ccc; stroke-dasharray: 3 3; fill: none; }
  .lnk { fill: none; stroke: #555; stroke-width: 1; }
  .lred { stroke: #d9343a; }
  .dots { stroke: #444; stroke-dasharray: 1.500 2.500; fill: none; }
  .glab { font-size: 8.600px; fill: #2a2a2a; }
  .lw { fill: #fff; }
  .ghead { font-size: 8.600px; font-weight: 700; fill: #222; }
  .bar { stroke: #222; stroke-width: 1; }
  .bar.b { fill: #2f8fdc; }
  .bar.r { fill: #e8432d; }
  .bar.t { fill: #1fb58f; }

  .network { height: 249px; flex: none; margin-top: 6px; background: #fff; position: relative; overflow: hidden; }
  .netsvg { position: absolute; left: 0; top: 0; }
  .nl { stroke-width: 1; }
  .nr { stroke: #e23a3a; }
  .nk { stroke: #555; }
  .nst { stroke-width: 1.500px; }
  .nr.nst { stroke: #ee6a6a; }
  .nk.nst { stroke: #777; }
  .node {
    position: absolute; width: 112.500px; height: 45px; box-sizing: border-box; border: 1px solid #e03a3a; border-radius: 4px; background: #fafafa; line-height: 11.300px; color: #222;
  }
  .blue { border-color: #5aa7ef; }
  .sel.node { width: 111px; border: 2px solid #2b8be8; box-shadow: 0 0 0 2px #d81e1e; }
  .nid { border-bottom: 1px solid #e0e0e0; padding-left: 2.500px; height: 10px; line-height: 10px; }
  .ntext { padding-left: 2.500px; }
  .sel .nid, .sel .ntext { padding-left: 1.500px; }
  .nscroll { position: absolute; right: 0; top: 0; bottom: 0; width: 13px; background: #f0f0f0; }
  .nscroll i { position: absolute; left: 5px; top: 11px; width: 2px; height: 13px; background: #666; }
</style>
